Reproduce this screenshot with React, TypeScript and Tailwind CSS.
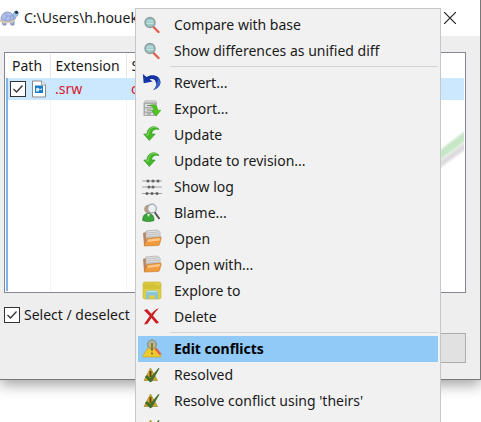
import type { ReactNode } from "react";

function Magnifier() {
  return (
    <svg viewBox="0 0 20 20" className="size-5 shrink-0">
      <path d="M11 11.500l5.500 5.500" stroke="#e2604f" strokeWidth="2.400" strokeLinecap="round" />
      <circle cx="8" cy="7.500" r="4.900" fill="#9ccbca" stroke="#8fa0a0" strokeWidth="1.600" />
      <path d="M5 6h6M4.500 8.500h7" stroke="#c8e8e6" strokeWidth="0.900" />
    </svg>
  );
}

function Revert() {
  return (
    <svg viewBox="0 0 20 20" className="size-5 shrink-0">
      <path d="M0.800 1l.9 9.200 9-1.600-2.900-2.200c3.400-1.100 6.200.6 6.300 4.500.1 2.300-.8 4.400-3 6.200 4.500-1.400 7.300-4.300 7.300-8.100C18.400 3.200 10.500.2 4.500 4.100z" fill="#1534a4" />
      <path d="M14.100 10.900c.1 2.300-.8 4.400-3 6.200 4.500-1.400 7.300-4.300 7.300-8.100-.5-2-1.500-3-3-4 .8 2 .2 4-1.300 5.900z" fill="#3f63c4" />
    </svg>
  );
}

function Export() {
  return (
    <svg viewBox="0 0 20 20" className="size-5 shrink-0">
      <path d="M3.500 1h9.500l2 2v14H1.500V4z" fill="#a9aca9" />
      <path d="M3.500 1h9.500l2 2.500H2z" fill="#cdcfcd" />
      <path d="M3 5h9v3H3zM3 9.500h8v3H3zM3 14h8v2H3z" fill="#dedfde" />
      <path d="M5 6.500h4M5 11h4M5 15h4" stroke="#828582" />
      <path d="M7.500 6.500c5-2 8 .4 8.100 4.700h3.200L14.200 17 9.400 11.200h2.800C12 8.600 10 7 7.500 6.500z" fill="#4cc51c" stroke="#3d9d20" strokeWidth="0.600" />
    </svg>
  );
}

function Update() {
  return (
    <svg viewBox="0 0 20 20" className="size-5 shrink-0">
      <path d="M17 4.500C14.500-.2 5 1 5 9H1.700l5.600 6.500L13.200 9H9.700C9.500 5.500 13 3.300 17 4.500z" fill="#43b925" stroke="#318c20" strokeWidth="0.600" />
      <path d="M15 2.900C11.500 1.200 6.500 2.500 6.300 9.800L4 10" fill="none" stroke="#8cdc6d" strokeWidth="0.900" />
    </svg>
  );
}

function Log() {
  return (
    <svg viewBox="0 0 20 20" className="size-5 shrink-0">
      <path d="M0 4h20M0 10h20M0 16.500h20" stroke="#a2a2a2" strokeWidth="1.200" />
      <g fill="#666">
        <circle cx="6" cy="4" r="1.600" /><circle cx="11" cy="4" r="1.600" /><circle cx="16" cy="4" r="1.600" />
        <circle cx="7" cy="10" r="1.600" /><circle cx="11" cy="10" r="1.600" />
        <circle cx="5" cy="16.500" r="1.600" /><circle cx="10" cy="16.500" r="1.600" /><circle cx="15" cy="16.500" r="1.600" />
      </g>
    </svg>
  );
}

function Blame() {
  return (
    <svg viewBox="0 0 20 20" className="size-5 shrink-0">
      <circle cx="6.500" cy="6" r="4.300" fill="#b59a82" />
      <path d="M.7 17.500c0-5 2-7 5.800-7s5.500 2.500 5.500 7c-3 1.300-8 1.300-11.300 0z" fill="#3ba73b" stroke="#237923" strokeWidth="0.700" />
      <path d="M5 11l1.500 3L8 11" fill="#e8f2df" />
      <path d="M12.500 9l5 7" stroke="#555" strokeWidth="2" />
      <circle cx="10" cy="5.500" r="4.300" fill="#edf1f4" stroke="#a0a8ac" strokeWidth="1.200" />
    </svg>
  );
}

function OpenFolder() {
  return (
    <svg viewBox="0 0 20 20" className="size-5 shrink-0">
      <path d="M1 4l3-1 1 13H2z" fill="#b98863" />
      <path d="M4 2l11-1 3 2v6H4z" fill="#e2e2e2" stroke="#a5a5a5" strokeWidth="0.700" />
      <path d="M5 4l11-1M5 6l12-1M5 8l12-1" stroke="#adadad" strokeWidth="0.700" />
      <path d="M5 9.500l13-1.500c1 0 1.300.4 1.200 1.100L17.500 15.500c-.2.800-.8 1-1.500 1L2 17z" fill="#f19a3c" stroke="#c3772f" strokeWidth="0.600" />
      <path d="M6 10.500L18 9l-.6 2.500L5.500 13z" fill="#ffc88a" />
    </svg>
  );
}

function Explorer() {
  return (
    <svg viewBox="0 0 20 20" className="size-5 shrink-0">
      <path d="M1 3q0-2 2-2h14q2 0 2 2v13q0 2-2 2H3q-2 0-2-2z" fill="#dfce43" stroke="#c6b83e" strokeWidth="0.700" />
      <path d="M3 2.500h9l2 2h4V8H2V3z" fill="#d3c13a" />
      <path d="M4 18v-7q0-1.500 1.500-1.500h8.500q2 0 2 1.500v7h-3v-3.500H7V18z" fill="#87c5d5" />
      <path d="M5 10.500h10" stroke="#bfe4e4" strokeWidth="1.200" />
    </svg>
  );
}

function Delete() {
  return (
    <svg viewBox="0 0 20 20" className="size-5 shrink-0">
      <path d="M2 3.300L5 2l4.400 4.800C11.500 4.200 14 2 17 1.300 14.500 3.700 12.700 6 11 8.700l6 6.800-2.700 1.200-4.900-5.600c-1.500 2.300-2.800 4.200-4.200 6L2 17.400c2-3.200 3.800-5.700 5.600-8.300z" fill="#cb1f24" />
    </svg>
  );
}

function Conflict() {
  return (
    <svg viewBox="0 0 20 20" className="size-5 shrink-0">
      <path d="M8.500 5q1.500-2 3 0L19 16.500q.5 1.500-1 1.500H2q-1.500 0-1-1.500z" fill="#edc92e" stroke="#c7a232" strokeWidth="0.700" />
      <path d="M13.500 9.500l5 6" stroke="#e0604c" strokeWidth="2.400" />
      <circle cx="10" cy="5.500" r="4.400" fill="#b9b48b" fillOpacity="0.800" stroke="#8d9388" strokeWidth="1.400" />
      <path d="M10 4v8" stroke="#7d6a28" strokeWidth="1.600" />
      <circle cx="10" cy="14.500" r="1" fill="#7d6a28" />
    </svg>
  );
}

function Resolved() {
  return (
    <svg viewBox="0 0 20 20" className="size-5 shrink-0">
      <path d="M8.500 3L15.500 15.500H2z" fill="#d2a925" stroke="#a48832" strokeWidth="0.700" />
      <path d="M8.500 6v6" stroke="#593c13" strokeWidth="1.800" />
      <path d="M4 11l4.500 4.500" stroke="#42702b" strokeWidth="3" />
      <path d="M7.500 17.500L8 13 16.500 3l1 .6-7.500 13z" fill="#42702b" />
    </svg>
  );
}

function Turtle() {
  return (
    <svg viewBox="0 0 20 18" className="h-[18px] w-5 shrink-0">
      <path d="M2 11l1 5h3v-3M10 12l1 4h3v-5" fill="#a5b4d8" stroke="#7182ad" strokeWidth="0.800" />
      <path d="M12.500 10l1-5Q14 1.500 16.500 2q2 .5 1.800 2.500Q18 7 16 7.500l-1.500 4" fill="#9dc4e8" stroke="#7398bd" strokeWidth="0.700" />
      <path d="M0 10q6 4.500 15 0v2q-6 4-15 1z" fill="#d6c8b6" />
      <path d="M1 10Q2 3 7.500 3T14 10q-7 4-13 0z" fill="#aebfeb" stroke="#7c8ec4" strokeWidth="0.800" />
      <path d="M5 4l2 3-2 4M7 7h4l2-1M11 7l-1 4" fill="none" stroke="#8799ce" strokeWidth="0.700" />
      <circle cx="16.500" cy="3.300" r="1.600" fill="#1d3453" />
    </svg>
  );
}

function PictureFile() {
  return (
    <svg viewBox="0 0 14 18" className="h-[18px] w-3.5 shrink-0">
      <path d="M.5 1h9l4 4v12H.5z" fill="#fff" stroke="#85898c" />
      <path d="M9.500 1v4h4" fill="#eee" stroke="#85898c" strokeWidth="0.800" />
      <path d="M3 5.500h8v7.500H3z" fill="#167bcb" />
      <path d="M4 8.500l2-1 2 2 2-1.500v2H7v1.500H4z" fill="#d5edff" />
    </svg>
  );
}

function Tick({ id, label }: { id: string; label?: string }) {
  return (
    <span className="grid size-4 shrink-0">
      <input id={id} type="checkbox" defaultChecked aria-label={label}
        className="col-start-1 row-start-1 size-4 appearance-none border border-[#333] bg-white" />
      <svg viewBox="0 0 16 16" className="pointer-events-none col-start-1 row-start-1 size-4">
        <path d="M3.500 8l3 3 6-6.500" fill="none" stroke="#333" strokeWidth="1.300" />
      </svg>
    </span>
  );
}

function Item({ icon, children, active = false }: { icon: ReactNode; children: ReactNode; active?: boolean }) {
  return (
    <li>
      <button type="button" role="menuitem"
        className={`flex h-[26px] w-full items-center gap-3 whitespace-nowrap pl-1 text-left ${active ? "bg-[#91c9f7] font-bold text-black" : ""}`}>
        {icon}
        <span>{children}</span>
      </button>
    </li>
  );
}

function ContextMenu() {
  return (
    <ul role="menu" className="absolute top-2 right-10 left-[135px] border border-[#c6c6c6] bg-[#f1f1f1] px-0.5 py-[3px]">
      <Item icon={<Magnifier />}>Compare with base</Item>
      <Item icon={<Magnifier />}>Show differences as unified diff</Item>
      <li role="separator" className="mt-0.5 mb-[3px] ml-8 h-px bg-[#d4d4d4]" />
      <Item icon={<Revert />}>Revert...</Item>
      <Item icon={<Export />}>Export...</Item>
      <Item icon={<Update />}>Update</Item>
      <Item icon={<Update />}>Update to revision...</Item>
      <Item icon={<Log />}>Show log</Item>
      <Item icon={<Blame />}>Blame...</Item>
      <Item icon={<OpenFolder />}>Open</Item>
      <Item icon={<OpenFolder />}>Open with...</Item>
      <Item icon={<Explorer />}>Explore to</Item>
      <Item icon={<Delete />}>Delete</Item>
      <li role="separator" className="mt-0.5 mb-[3px] ml-8 h-px bg-[#d4d4d4]" />
      <Item icon={<Conflict />} active>Edit conflicts</Item>
      <Item icon={<Resolved />}>Resolved</Item>
      <Item icon={<Resolved />}>Resolve conflict using 'theirs'</Item>
      <Item icon={<Resolved />}>{null}</Item>
    </ul>
  );
}

export default function App() {
  return (
    <div className="relative h-screen overflow-hidden bg-white font-['Noto_Sans','Open_Sans',sans-serif] text-sm text-[#1a1a1a]">
      <section className="border-r border-b border-[#777] bg-[#eee] shadow-[0_4px_14px_0_rgba(0,0,0,0.4)]">
        <header className="flex h-9 items-center gap-1 bg-white pr-6">
          <Turtle />
          <h1 className="grow whitespace-nowrap">C:\Users\h.houek</h1>
          <button type="button" aria-label="Close">
            <svg viewBox="0 0 12 12" className="size-3">
              <path d="M0 0l12 12M12 0L0 12" stroke="#222" strokeWidth="1.200" />
            </svg>
          </button>
        </header>
        <div className="pt-4 pr-3.5 pb-4 pl-1">
          <div className="flex h-[241px] flex-col border border-[#828790] bg-white p-px">
            <div className="relative grow">
              <svg viewBox="0 0 26 42" className="absolute top-[76px] right-0 h-[42px] w-[26px]">
                <defs>
                  <filter id="soft" x="-20%" y="-50%" width="140%" height="200%">
                    <feGaussianBlur stdDeviation="1.200" />
                  </filter>
                </defs>
                <path d="M-6 40L30 14" stroke="#dedbde" strokeWidth="6" filter="url(#soft)" />
                <path d="M-6 31L30 4" stroke="#c6e6c6" strokeWidth="8" filter="url(#soft)" />
              </svg>
              <table className="relative h-full w-full table-fixed border-collapse text-left">
                <colgroup>
                  <col className="w-[43px]" />
                  <col className="w-[76px]" />
                  <col />
                </colgroup>
                <thead>
                  <tr className="h-6">
                    <th className="border-r border-[#e5e5e5] pl-[5px] font-normal">Path</th>
                    <th className="border-r border-[#e5e5e5] pl-[5px] font-normal">Extension</th>
                    <th className="pl-[5px] font-normal">S</th>
                  </tr>
                </thead>
                <tbody>
                  <tr className="h-[22px] bg-[#cce8ff] text-[#d9172d]">
                    <td className="border-l-2 border-l-[#7eb4ea] p-0 pl-0.5">
                      <div className="flex items-center gap-1.5">
                        <Tick id="file" label="Select file" />
                        <PictureFile />
                      </div>
                    </td>
                    <td className="pl-[5px]">.srw</td>
                    <td className="pl-[5px]">c</td>
                  </tr>
                  <tr>
                    <td className="border-r border-l-2 border-r-[#f0f4f7] border-l-[#7eb4ea]" />
                    <td className="border-r border-[#f0f4f7]" />
                    <td />
                  </tr>
                </tbody>
              </table>
            </div>
          </div>
          <div className="mt-3 flex items-center gap-1">
            <Tick id="all" />
            <label htmlFor="all">Select / deselect</label>
          </div>
          <div className="mt-2 flex justify-end">
            <button type="button" aria-label="Cancel" className="h-[30px] w-24 border border-[#adadad] bg-[#e1e1e1]" />
          </div>
        </div>
      </section>
      <ContextMenu />
    </div>
  );
}
